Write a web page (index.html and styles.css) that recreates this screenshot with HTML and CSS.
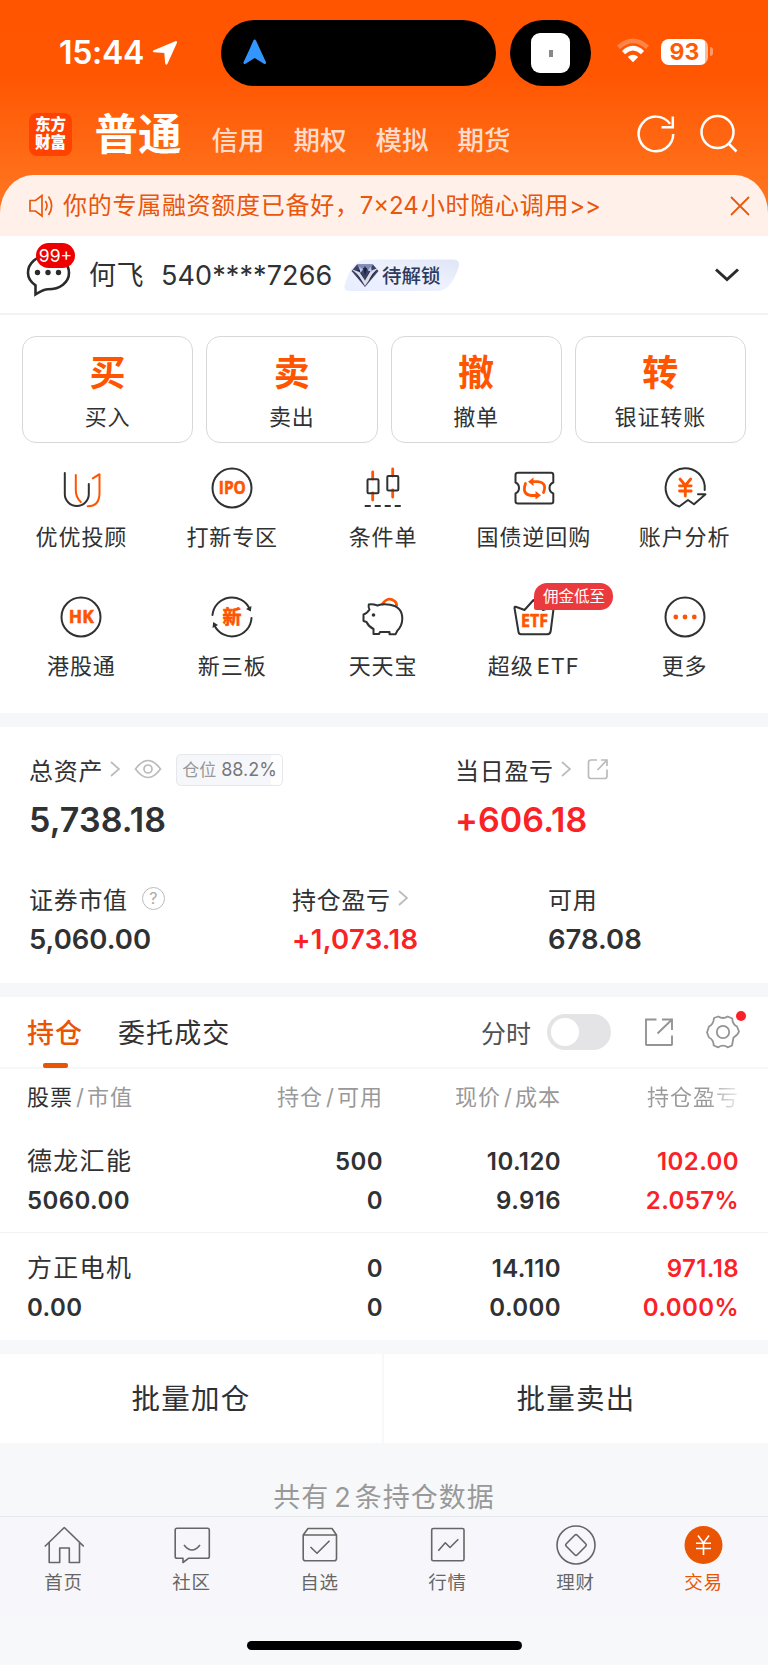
FILE: index.html
```html
<!DOCTYPE html>
<html lang="zh-CN">
<head>
<meta charset="utf-8">
<title>交易</title>
<link rel="stylesheet" href="styles.css">
</head>
<body>
<div class="screen">
  <header class="hero">
    <div class="status">
      <div class="clock">15:44
        <svg width="26" height="26" viewBox="0 0 26 26"><path d="M23.200 1.200 1.800 10.200q-2.200 1.300.2 2.100l10.300.6.9 10.600q1 2.600 2.400.1L25 2.800q.3-2.600-1.800-1.600z" fill="#fff"/></svg>
      </div>
      <div class="island">
        <svg width="24" height="26" viewBox="0 0 24 26"><path d="M10.400 1.600q1.200-2.200 2.600 0 4.500 10 9.900 21.400.5 2.600-2 1.800L11.700 18.900 2.500 24.800Q0 25.600.6 23 6 12 10.400 1.600z" fill="#3396ff"/></svg>
      </div>
      <div class="island-mini"><div class="app"><i></i></div></div>
      <svg class="wifi" width="34" height="26" viewBox="0 0 34 26">
        <path d="M2.500 9.300Q17-3.500 31.500 9.300" fill="none" stroke="#fff" stroke-opacity=".28" stroke-width="4.500"/>
        <path d="M7.500 14.600Q17 5.800 26.500 14.600" fill="none" stroke="#fff" stroke-width="4.500"/>
        <path d="M17 24.300 11.800 19q5.200-4.300 10.400 0z" fill="#fff"/>
      </svg>
      <div class="battery"><span>93</span></div>
      <i class="battery-tip"></i>
    </div>
    <nav class="account-tabs">
      <div class="logo"><span>东方</span><span>财富</span></div>
      <b>普通</b>
      <span>信用</span><span>期权</span><span>模拟</span><span>期货</span>
      <svg class="refresh" width="40" height="40" viewBox="0 0 40 40" fill="none" stroke="#fff" stroke-width="2.500"><path d="M37.200 20A17.300 17.300 0 1 1 34 9.900"/><path d="M36.800 2.500V13.300H25.500"/></svg>
      <svg class="search" width="40" height="40" viewBox="0 0 40 40" fill="none" stroke="#fff" stroke-width="2.500"><circle cx="18.500" cy="18" r="16"/><path d="M29.500 29.500 37.500 37.500"/></svg>
    </nav>
  </header>

  <div class="notice-wrap"><div class="notice">
    <svg width="26" height="24" viewBox="0 0 26 24" fill="none" stroke="#e65a10" stroke-width="1.700"><path d="M2 6.500H7.500L14 1.500V22L7.500 17H2z"/><path d="M17.300 7q3.400 4.700 0 9.400M20.500 2.600q6.300 9 0 18.300"/></svg>
    <p>你的专属融资额度已备好，<span>7×24</span><em>小时随心调用</em><span>&gt;&gt;</span></p>
    <svg class="close" width="20" height="20" viewBox="0 0 20 20" stroke="#e65a10" stroke-width="1.800"><path d="M1 1 19 19M19 1 1 19"/></svg>
  </div></div>

  <section class="user">
    <div class="chat">
      <svg width="46" height="50" viewBox="0 0 46 50" fill="none" stroke="#2b2b2d" stroke-width="2.600"><path d="M9.500 47.500V38.300C4.500 35 2 30.800 2 25.800 2 16 11 8.500 22 8.500S43 16 43 25.800C43 35.500 34 42.300 22 42.300 17.500 42.300 14.500 44.500 9.500 47.500z"/><g fill="#2b2b2d" stroke="none"><circle cx="11.500" cy="25.500" r="2.700"/><circle cx="22" cy="25.500" r="2.700"/><circle cx="32.500" cy="25.500" r="2.700"/></g></svg>
      <span class="count">99+</span>
    </div>
    <span class="name">何飞</span><span class="acct">540****7266</span>
    <div class="level">
      <svg class="plate" width="116" height="33" viewBox="0 0 116 33"><defs><linearGradient id="lv" x1="0" y1="1" x2="1" y2="0"><stop offset="0" stop-color="#e9eeff"/><stop offset=".55" stop-color="#edf1ff"/><stop offset="1" stop-color="#dfe5f6"/></linearGradient></defs><path d="M22 .5H108q9 0 6.500 8Q107 32 93 32H6Q-1.500 32 1 25 8 1 22 .5z" fill="url(#lv)"/></svg>
      <svg class="gem" width="28" height="28" viewBox="0 0 28 28"><path d="M6 3.500 22 3.500 27.500 10 14 26 .5 10z" fill="#3c4268"/><path d="M6 3.500 10 10.500 14 5 18 10.500 22 3.500z" fill="#7f8bb8"/><path d="M3 10 9 9 14 20 19 9 25 10 14 25z" fill="#1c2140"/><path d="M0 8 8.500 11 14 19.500 19.500 10 28 6.500Q21 12 17.500 20L14 25 11 20Q7 12.500 0 8z" fill="#dcdde8"/><path d="M8 5.500 12 8.500 9.500 12zM20 5.500 17 9.500 21 11z" fill="#b8c3e5"/><path d="M12.500 7 16 7 14 15z" fill="#1c2140"/></svg>
      <span>待解锁</span>
    </div>
    <svg class="down" width="26" height="16" viewBox="0 0 26 16" fill="none" stroke="#2b2b2d" stroke-width="3"><path d="M2 2.500 13 12.500 24 2.500"/></svg>
  </section>

  <section class="actions">
    <div class="action"><b>买</b><span>买入</span></div>
    <div class="action"><b>卖</b><span>卖出</span></div>
    <div class="action"><b>撤</b><span>撤单</span></div>
    <div class="action"><b>转</b><span>银证转账</span></div>
  </section>

  <section class="tools">
    <div class="tool"><svg viewBox="0 0 44 44"><path d="M5.800 7V28a12 12 0 0 0 24 0V18"/><path class="o" d="M16.800 9V24q0 7.500 5 12M33.800 12.300 40.500 8.200V27q0 13.300-11.800 13.300"/></svg><span>优优投顾</span></div>
    <div class="tool"><svg viewBox="0 0 44 44"><circle cx="22" cy="22" r="19.500"/><text x="22.300" y="28.300" font-size="17.500" textLength="27" lengthAdjust="spacingAndGlyphs">IPO</text></svg><span>打新专区</span></div>
    <div class="tool"><svg viewBox="0 0 44 44"><path class="o w" d="M11.700 6V13M11.700 27V34M31.700 3V10M31.700 24V31"/><rect x="6.500" y="13.200" width="11" height="14" rx="1"/><rect x="26.300" y="10" width="11" height="14.500" rx="1"/><path d="M4.500 40H9M14.500 40H19M24.500 40H29M34.500 40H39"/></svg><span>条件单</span></div>
    <div class="tool"><svg viewBox="0 0 44 44"><path d="M6 6.800H39Q41.300 6.800 41.300 9V16.500Q37.500 18 37.500 22T41.300 27.500V35.500Q41.300 37.500 39 37.500H6Q3.500 37.500 3.500 35.500V27.500Q7 26 7 22T3.500 16.500V9Q3.500 6.800 6 6.800z"/><path class="o w" d="M13.500 17.500Q9.500 28.500 19.500 29.500H24M31.500 26.500Q35.500 16.500 25.500 15.600H21"/><path class="of" d="M23.500 25 29 29.300 23.500 33.500zM21.500 11.600 16 15.800 21.500 20z"/></svg><span>国债逆回购</span></div>
    <div class="tool"><svg viewBox="0 0 44 44"><path d="M41.700 24A19.600 19.600 0 1 0 16.300 40.500L25 34 31 38.300 42.500 28.300H35"/><path class="o w" d="M17 13 22.300 19.500 27.700 13M16.500 19.800H28.200M16.500 25H28.200M22.300 19.500V30"/></svg><span>账户分析</span></div>
    <div class="tool"><svg viewBox="0 0 44 44"><circle cx="22" cy="22" r="19.500"/><text x="22.300" y="28.300" font-size="17.500" textLength="25" lengthAdjust="spacingAndGlyphs">HK</text></svg><span>港股通</span></div>
    <div class="tool"><svg viewBox="0 0 44 44"><path d="M2.500 20A19.500 19.500 0 0 1 39.500 13.500M41.500 23A19.500 19.500 0 0 1 4.500 30.500"/><path class="bf" d="M41.500 11 40.800 16.500 36 14zM2.500 33 3.200 27 8 30z"/><text x="22" y="28.800" font-size="19">新</text></svg><span>新三板</span></div>
    <div class="tool"><svg viewBox="0 0 44 44"><path class="o w" d="M21.500 9Q27 1 33.500 6 36 8 35.500 10.500"/><path d="M7.800 9.500Q11 8.500 16.500 10.500 22 8.500 29 9.800 41.500 12 41.300 24 41 31 36.500 35.500L34.500 39.300H28.500V37H19L18 39H12.500V34Q7.500 31.500 5.500 27L2.500 26V19.500Q6 18.500 8.500 14.500 7 12.500 7.800 9.500z"/><circle class="bf" cx="12.500" cy="20" r="1.800"/></svg><span>天天宝</span></div>
    <div class="tool"><svg viewBox="0 0 44 44"><path d="M6.500 37 2.500 13Q2.500 11 4.500 12L12.500 15 21.500 5 31 15 39.500 12Q42 11.500 41.500 14L38.700 36Q38.300 39.200 35.500 39.200H9Q6.800 39.200 6.500 37z"/><text x="22.500" y="32.200" font-size="17.500" textLength="27" lengthAdjust="spacingAndGlyphs">ETF</text></svg><i class="promo">佣金低至</i><span>超级<u>ETF</u></span></div>
    <div class="tool"><svg viewBox="0 0 44 44"><circle cx="22" cy="22" r="19.500"/><g class="of"><circle cx="12.800" cy="22" r="2.400"/><circle cx="22" cy="22" r="2.400"/><circle cx="31.300" cy="22" r="2.400"/></g></svg><span>更多</span></div>
  </section>

  <section class="assets">
    <div class="pair">
      <div class="asset big">
        <h3>总资产
          <svg class="chev" width="10" height="16" viewBox="0 0 10 16"><path d="M1 1 9 8 1 15"/></svg>
          <svg class="eye" width="28" height="20" viewBox="0 0 28 20"><path d="M1.500 10Q14-7 26.500 10 14 27 1.500 10z"/><circle cx="14" cy="10" r="4"/></svg>
          <span class="pos">仓位 <b>88.2%</b></span></h3>
        <strong>5,738.18</strong>
      </div>
      <div class="asset big up">
        <h3>当日盈亏
          <svg class="chev" width="10" height="16" viewBox="0 0 10 16"><path d="M1 1 9 8 1 15"/></svg>
          <svg class="share" width="22" height="22" viewBox="0 0 22 22"><path d="M10 2H4Q1.500 2 1.500 4.500V18Q1.500 20.500 4 20.500H17.500Q20 20.500 20 18V11.500M14 2H20V8M20 2 10.500 12"/></svg></h3>
        <strong>+606.18</strong>
      </div>
    </div>
    <div class="trio">
      <div class="asset"><h3>证券市值 <i class="help">?</i></h3><strong>5,060.00</strong></div>
      <div class="asset up"><h3>持仓盈亏 <svg class="chev" width="10" height="16" viewBox="0 0 10 16"><path d="M1 1 9 8 1 15"/></svg></h3><strong>+1,073.18</strong></div>
      <div class="asset"><h3>可用</h3><strong>678.08</strong></div>
    </div>
  </section>

  <section class="holdings">
    <div class="bar">
      <div class="tab on">持仓</div><div class="tab">委托成交</div>
      <span class="mode">分时</span><div class="switch"><i></i></div>
      <svg class="out" width="28" height="28" viewBox="0 0 28 28" fill="none" stroke="#949494" stroke-width="1.900"><path d="M11.500 1.500H1V26.500Q1 27 1.500 27H26.500Q27 27 27 26.500V17.500M17 1.500H27V12M26.500 2 12.500 15.500"/></svg>
      <div class="gear"><svg width="34" height="34" viewBox="0 0 34 34" fill="none" stroke="#949494" stroke-width="1.800"><path d="M8 3 12.300 1.500Q17 4.500 21.700 1.500L26.300 3.500Q26.500 9.500 31 11.500L33 16.500Q31.500 20.500 27.500 22.500L26 30.500 21.700 32.300Q17 29 12.300 32.300L7.700 30.500Q7.500 24.500 3 22.500L1 17.500 3 11.500Q7.500 9.500 8 3z" stroke-linejoin="round"/><circle cx="17" cy="17" r="6.200"/></svg><i></i></div>
    </div>
    <div class="row head"><span><b>股票</b><u>/</u>市值</span><span>持仓<u>/</u>可用</span><span>现价<u>/</u>成本</span><span class="fade">持仓盈亏</span></div>
    <div class="row">
      <span><em>德龙汇能</em><b>5060.00</b></span><span><b>500</b><b>0</b></span><span><b>10.120</b><b>9.916</b></span><span class="up"><b>102.00</b><b>2.057%</b></span>
    </div>
    <div class="row">
      <span><em>方正电机</em><b>0.00</b></span><span><b>0</b><b>0</b></span><span><b>14.110</b><b>0.000</b></span><span class="up"><b>971.18</b><b>0.000%</b></span>
    </div>
  </section>

  <div class="batch"><button>批量加仓</button><button>批量卖出</button></div>
  <p class="total">共有<span>2</span>条持仓数据</p>

  <nav class="tabbar">
    <div><svg viewBox="0 0 40 40"><path d="M.8 21.500 20.300 2.500 39.800 21.500M5.200 17.500V37.500H15.700V23H25.300V37.500H35.500V17.500"/></svg><span>首页</span></div>
    <div><svg viewBox="0 0 40 40"><path d="M5 3.300H35.500Q37.300 3.300 37.300 5V31.500Q37.300 33.300 35.500 33.300H16.500L11 37.500V33.300H5Q3.200 33.300 3.200 31.500V5Q3.200 3.300 5 3.300zM12 20Q20 30 28 20"/></svg><span>社区</span></div>
    <div><svg viewBox="0 0 40 40"><path d="M3.200 10 8 3.500H32L36.500 10V33.500Q36.500 35.800 34 35.800H5.500Q3.200 35.800 3.200 33.500V10H36.500M10.500 22 17 28.300 29.500 15.700"/></svg><span>自选</span></div>
    <div><svg viewBox="0 0 40 40"><rect x="3.700" y="3.500" width="32.300" height="32.300" rx="1.500"/><path d="M10.300 25.700 17.300 17.800 22 22.500 30.300 14.200"/></svg><span>行情</span></div>
    <div><svg viewBox="0 0 40 40"><circle cx="20" cy="20" r="19"/><path d="M18.700 10.300Q20 9 21.300 10.300L29.700 18.700Q31 20 29.700 21.300L21.300 29.700Q20 31 18.700 29.700L10.300 21.300Q9 20 10.300 18.700z"/></svg><span>理财</span></div>
    <div class="on"><svg viewBox="0 0 40 40"><circle cx="19.500" cy="20" r="19" fill="#ea5504" stroke="none"/><path d="M14 10.500 19.500 18 25 10.500M12 18.300H27M12 23.500H27M19.500 18V30" stroke="#fff"/></svg><span>交易</span></div>
  </nav>
  <div class="home-bar"></div>
</div>
</body>
</html>
```

FILE: styles.css
```css
* { box-sizing: border-box; margin: 0; padding: 0; }
body { background: #f7f8fa; font-family: Inter, "Noto Sans CJK SC", sans-serif; color: #303133; }
i, em { font-style: normal; }
u { text-decoration: none; }
svg { display: block; flex: none; }
.screen { width: 768px; height: 1665px; display: flex; flex-direction: column; overflow: hidden; }
.screen > * { flex: none; }

/* header */
.hero { height: 175px; background: linear-gradient(#ff5500 0, #ff5602 75px, #ff6f1a 175px); color: #fff; }
.status { height: 106px; display: flex; align-items: center; position: relative; }
.clock { width: 221px; padding-left: 59px; display: flex; align-items: center; gap: 8px; font-size: 32px; font-weight: 600; letter-spacing: -.3px; line-height: 40px; }
.island { width: 275px; height: 66px; border-radius: 33px; background: #000; padding: 19px 0 0 22px; }
.island-mini { width: 81px; height: 66px; margin-left: 14px; border-radius: 33px; background: #000; display: flex; align-items: center; justify-content: center; }
.app { width: 39px; height: 40px; border-radius: 9px; background: #fff; display: flex; align-items: center; justify-content: center; }
.app i { width: 4px; height: 7px; background: #888; }
.wifi { margin: -4px 0 0 25px; }
.battery { width: 47px; height: 26px; margin: -3px 0 0 11px; border-radius: 8px; background: linear-gradient(90deg, #fff 44px, #ffbb99 44px); text-align: center; color: #ff5a05; font-size: 23px; font-weight: 700; line-height: 26px; }
.battery-tip { width: 3px; height: 9px; margin: -3px 0 0 2px; border-radius: 0 4px 4px 0; background: #ff9a66; }
.account-tabs { height: 69px; padding-left: 29px; display: flex; align-items: flex-start; }
.logo { width: 43px; height: 43px; margin-top: 7px; border-radius: 8px; background: #ff4102; font-weight: 900; font-size: 15.500px; line-height: 18px; text-align: center; padding-top: 3px; }
.logo span { display: block; }
.account-tabs > b { width: 88px; margin: 3px 29px 0 22.500px; font-size: 43.500px; line-height: 50px; font-weight: 700; }
.account-tabs > span { width: 82px; margin-top: 18px; font-size: 26.500px; line-height: 32px; font-weight: 500; color: #ffdccb; white-space: nowrap; }
.refresh { margin: 8px 0 0 96px; }
.search { margin: 8px 0 0 23px; }
.notice-wrap { height: 61px; background: linear-gradient(#ff6f1a, #ff7a2a); }
.notice { height: 61px; border-radius: 33px 33px 0 0 / 38px 38px 0 0; background: #fff1ea; display: flex; align-items: center; padding: 0 18px 0 28px; color: #e9560c; }
.notice p { margin-left: 9px; font-size: 24px; letter-spacing: .72px; line-height: 30px; white-space: nowrap; }
.notice em { margin-left: 2px; }
.notice span { letter-spacing: 0; }
.close { margin-left: auto; }

/* account row */
.user { height: 79px; background: #fff; border-bottom: 2px solid #f2f3f5; display: flex; align-items: center; padding: 0 28px 0 26px; }
.chat { position: relative; width: 46px; height: 50px; margin-top: -6px; margin-right: 17px; }
.count { position: absolute; left: 10px; top: -4px; width: 39px; height: 25px; border-radius: 13px; background: #ee0000; color: #fff; font-size: 17.500px; line-height: 25px; text-align: center; }
.name, .acct { font-size: 27px; line-height: 40px; margin-top: 3px; }
.name { width: 72px; letter-spacing: .6px; }
.acct { letter-spacing: .1px; width: 183px; white-space: nowrap; }
.level { position: relative; width: 116px; height: 33px; margin-top: 1px; }
.plate { position: absolute; left: 0; top: 0; }
.gem { position: absolute; left: 7px; top: 2px; }
.level span { position: relative; display: block; padding-left: 38px; font-size: 19.500px; font-weight: 500; line-height: 34px; color: #2c3a5c; white-space: nowrap; }
.down { margin-left: auto; }

.actions { height: 128px; padding: 21px 22px 0; display: grid; grid-template-columns: repeat(4, 1fr); gap: 13px; background: #fff; }
.action { height: 107px; border: 1px solid #d8d8da; border-radius: 14px; text-align: center; }
.action b { display: block; margin-top: 14px; font-size: 36px; font-weight: 700; line-height: 44px; color: #ff5500; }
.action span { display: block; margin-top: 6px; font-size: 22px; letter-spacing: .9px; line-height: 32px; }

.tools { height: 270px; padding: 23px 8px 0 6px; display: grid; grid-template-columns: repeat(5, 1fr); grid-auto-rows: 128.500px; background: #fff; }
.tool { position: relative; display: flex; flex-direction: column; align-items: center; }
.tool svg { width: 44px; height: 44px; fill: none; stroke: #303133; stroke-width: 2; stroke-linejoin: round; stroke-linecap: round; overflow: visible; }
.tool svg .o { stroke: #ff5500; }
.tool svg .w { stroke-width: 2.800; }
.tool svg .of { fill: #ff5500; stroke: none; }
.tool svg .bf { fill: #303133; stroke: none; }
.tool svg text { fill: #ff5500; stroke: #ff5500; stroke-width: .6; text-anchor: middle; font-weight: 700; font-family: "Open Sans", "Noto Sans CJK SC", sans-serif; }
.tool > span { margin-top: 11px; font-size: 22px; letter-spacing: .9px; line-height: 32px; }
.tool u { margin-left: 3px; }
.promo { position: absolute; left: 76px; top: -12px; width: 79px; height: 27px; border-radius: 13px 13px 13px 2px; background: #eb3a3d; color: #fff; font-size: 15.500px; line-height: 27px; text-align: center; }

/* assets */
.assets { height: 284px; border: solid #f6f7f9; border-width: 14px 0; background: #fff; }
.pair { display: grid; grid-template-columns: 426px 1fr; padding: 22px 0 0 29px; }
.trio { display: grid; grid-template-columns: 263px 256px 1fr; padding: 30px 0 0 29px; }
.asset h3 { height: 40px; display: flex; align-items: center; font-size: 24px; letter-spacing: .7px; font-weight: 400; white-space: nowrap; }
.asset strong { display: block; font-size: 27.500px; font-weight: 600; line-height: 42px; }
.trio .up strong { letter-spacing: .3px; }
.asset.big strong { font-size: 34px; letter-spacing: .1px; line-height: 56px; margin-top: 3px; }
.up strong, .up b { color: #fa2226; }
.assets svg { fill: none; stroke: #bbb; stroke-width: 1.700; }
.chev { margin-left: 7px; }
.eye { margin-left: 14px; }
.share { margin-left: 16px; }
.pos { width: 107px; height: 32px; margin: 2px 0 0 14px; border: 1.500px solid #e6e7ea; border-radius: 5px; background: linear-gradient(90deg, #f6f7fa 94px, #fff 94px); font-size: 17px; line-height: 30px; letter-spacing: 0; text-align: center; color: #999; }
.pos b { font-weight: 400; color: #76777a; font-size: 18px; }
.help { width: 23px; height: 23px; margin-left: 14px; border: 1.600px solid #bbb; border-radius: 50%; font-size: 16px; line-height: 20px; letter-spacing: 0; text-align: center; color: #aaa; }

/* holdings */
.holdings { background: #fff; height: 343px; }
.bar { height: 72px; border-bottom: 2px solid #f6f7f9; display: flex; align-items: center; padding-left: 27px; }
.tab { position: relative; font-size: 27px; letter-spacing: 1.100px; line-height: 66px; padding-top: 4px; width: 91px; white-space: nowrap; }
.tab + .tab { width: 363px; }
.tab.on { color: #ea5504; font-weight: 500; }
.tab.on::after { content: ""; position: absolute; left: 16px; bottom: -1px; width: 25px; height: 5px; border-radius: 2px; background: #ea5504; }
.mode { font-size: 25px; width: 66px; color: #505153; }
.switch { width: 64px; height: 36px; border-radius: 18px; background: #e4e4e6; padding: 4px; }
.switch i { display: block; width: 28px; height: 28px; border-radius: 50%; background: #fff; }
.out { margin-left: 34px; }
.gear { position: relative; margin-left: 33px; }
.gear i { position: absolute; right: -6px; top: -4px; width: 10px; height: 10px; border-radius: 50%; background: #fa2226; }
.row { height: 107px; padding: 17px 0 0 27px; display: grid; grid-template-columns: repeat(4, 178px); font-size: 24px; letter-spacing: .4px; text-align: right; }
.row + .row + .row { padding-top: 16px; border-top: 1px solid #f1f2f4; }
.row span:first-child { text-align: left; }
.row b, .row em { display: block; font-weight: 600; line-height: 39px; }
.row em { font-weight: 400; font-size: 25px; letter-spacing: 1.300px; }
.row.head { height: 56px; padding-top: 14px; font-size: 22px; letter-spacing: 1px; line-height: 28px; color: #999; }
.row.head b { display: inline; font-weight: 400; color: #303133; line-height: 28px; }
.row.head u { margin: 0 2px 0 3px; }
.row.head .fade { color: transparent; background: linear-gradient(90deg, #999 145px, #e8e8e8 176px); background-clip: text; -webkit-background-clip: text; }

.batch { height: 103px; padding-top: 14px; display: grid; grid-template-columns: 382px 384px; gap: 2px; }
.batch button { border: 0; background: #fff; font: 400 28.500px/89px Inter, "Noto Sans CJK SC", sans-serif; letter-spacing: 1.300px; color: #303133; }
.total { height: 73px; line-height: 109px; font-size: 27px; letter-spacing: 1px; color: #999; text-align: center; }
.total span { margin: 0 3px 0 5px; }

.tabbar { height: 100px; border-top: 1px solid #e6e7ea; background: #f7f7fb; padding-top: 8px; display: grid; grid-template-columns: repeat(6, 128px); }
.tabbar div { display: flex; flex-direction: column; align-items: center; font-size: 18.500px; line-height: 26px; letter-spacing: .8px; color: #666; }
.tabbar svg { width: 40px; height: 40px; margin-bottom: 4px; fill: none; stroke: #666; stroke-width: 1.600; stroke-linejoin: round; }
.tabbar span { margin-right: 1px; }
.tabbar .on { color: #ea5504; }
.home-bar { width: 275px; height: 9px; margin: 25px auto 0; border-radius: 5px; background: #000; }
```
